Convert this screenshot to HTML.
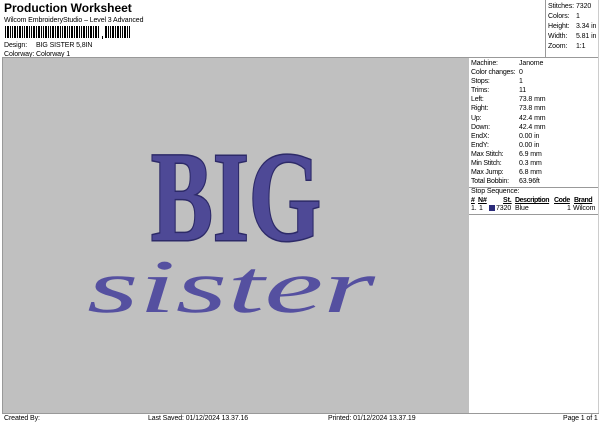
<!DOCTYPE html>
<html><head><meta charset="utf-8"><style>
*{margin:0;padding:0;box-sizing:border-box}
body{width:600px;height:424px;background:#fff;font-family:"Liberation Sans",Arial,sans-serif;color:#000;position:relative;overflow:hidden;font-size:7px}
.a{position:absolute;white-space:nowrap}
.t{font-size:7px;line-height:9px;letter-spacing:-0.1px}
</style></head><body>
<div class="a" style="left:4px;top:1px;font-size:12px;font-weight:bold;line-height:14px">Production Worksheet</div>
<div class="a t" style="left:4px;top:16px">Wilcom EmbroideryStudio – Level 3 Advanced</div>
<svg class="a" style="left:5px;top:26px" width="125" height="14">
<g fill="#000">
<rect x="0" y="0" width="1" height="12"/><rect x="2" y="0" width="2" height="12"/><rect x="5" y="0" width="1" height="12"/><rect x="7" y="0" width="1" height="12"/><rect x="9" y="0" width="2" height="12"/><rect x="12" y="0" width="1" height="12"/><rect x="14" y="0" width="2" height="12"/><rect x="17" y="0" width="1" height="12"/><rect x="19" y="0" width="1" height="12"/><rect x="21" y="0" width="2" height="12"/><rect x="24" y="0" width="1" height="12"/><rect x="26" y="0" width="1" height="12"/><rect x="28" y="0" width="2" height="12"/><rect x="31" y="0" width="1" height="12"/><rect x="33" y="0" width="2" height="12"/><rect x="36" y="0" width="1" height="12"/><rect x="38" y="0" width="1" height="12"/><rect x="40" y="0" width="2" height="12"/><rect x="43" y="0" width="1" height="12"/><rect x="45" y="0" width="1" height="12"/><rect x="47" y="0" width="2" height="12"/><rect x="50" y="0" width="1" height="12"/><rect x="52" y="0" width="2" height="12"/><rect x="55" y="0" width="1" height="12"/><rect x="57" y="0" width="1" height="12"/><rect x="59" y="0" width="2" height="12"/><rect x="62" y="0" width="1" height="12"/><rect x="64" y="0" width="1" height="12"/><rect x="66" y="0" width="2" height="12"/><rect x="69" y="0" width="1" height="12"/><rect x="71" y="0" width="2" height="12"/><rect x="74" y="0" width="1" height="12"/><rect x="76" y="0" width="1" height="12"/><rect x="78" y="0" width="2" height="12"/><rect x="81" y="0" width="1" height="12"/><rect x="83" y="0" width="1" height="12"/><rect x="85" y="0" width="2" height="12"/><rect x="88" y="0" width="1" height="12"/><rect x="90" y="0" width="2" height="12"/><rect x="93" y="0" width="1" height="12"/>
<rect x="97" y="10" width="1" height="3"/>
<rect x="100" y="0" width="2" height="12"/><rect x="103" y="0" width="1" height="12"/><rect x="105" y="0" width="1" height="12"/><rect x="107" y="0" width="2" height="12"/><rect x="110" y="0" width="1" height="12"/><rect x="112" y="0" width="2" height="12"/><rect x="115" y="0" width="1" height="12"/><rect x="117" y="0" width="1" height="12"/><rect x="119" y="0" width="2" height="12"/><rect x="122" y="0" width="1" height="12"/><rect x="124" y="0" width="1" height="12"/>
</g></svg>
<div class="a t" style="left:4px;top:41px">Design:</div><div class="a t" style="left:36px;top:41px">BIG SISTER 5,8IN</div>
<div class="a t" style="left:4px;top:50px">Colorway:</div><div class="a t" style="left:36px;top:50px">Colorway 1</div>

<div class="a" style="left:545px;top:0;width:1px;height:58px;background:#999"></div>
<div class="a t" style="left:548px;top:2px;line-height:10px">Stitches:<br>Colors:<br>Height:<br>Width:<br>Zoom:</div>
<div class="a t" style="left:576px;top:2px;line-height:10px">7320<br>1<br>3.34 in<br>5.81 in<br>1:1</div>

<div class="a" style="left:2px;top:57px;width:597px;height:1px;background:#999"></div>
<div class="a" style="left:2px;top:58px;width:1px;height:356px;background:#999"></div>
<div class="a" style="left:598px;top:0;width:1px;height:414px;background:#ccc"></div>
<div class="a" style="left:3px;top:58px;width:466px;height:355px;background:#c0c0c0"></div>
<div class="a" style="left:2px;top:413px;width:597px;height:1px;background:#999"></div>

<div class="a t" style="left:471px;top:59px;line-height:9.1px;letter-spacing:-0.2px">Machine:<br>Color changes:<br>Stops:<br>Trims:<br>Left:<br>Right:<br>Up:<br>Down:<br>EndX:<br>EndY:<br>Max Stitch:<br>Min Stitch:<br>Max Jump:<br>Total Bobbin:</div>
<div class="a t" style="left:519px;top:59px;line-height:9.1px">Janome<br>0<br>1<br>11<br>73.8 mm<br>73.8 mm<br>42.4 mm<br>42.4 mm<br>0.00 in<br>0.00 in<br>6.9 mm<br>0.3 mm<br>6.8 mm<br>63.96ft</div>
<div class="a" style="left:469px;top:187px;width:129px;height:1px;background:#999"></div>
<div class="a t" style="left:471px;top:187px">Stop Sequence:</div>
<div class="a t" style="left:471px;top:196px;font-weight:bold;text-decoration:underline">#</div>
<div class="a t" style="left:478px;top:196px;font-weight:bold;text-decoration:underline">N#</div>
<div class="a t" style="left:503px;top:196px;font-weight:bold;text-decoration:underline">St.</div>
<div class="a t" style="left:515px;top:196px;font-weight:bold;text-decoration:underline;letter-spacing:-0.4px">Description</div>
<div class="a t" style="left:554px;top:196px;font-weight:bold;text-decoration:underline;letter-spacing:-0.4px">Code</div>
<div class="a t" style="left:574px;top:196px;font-weight:bold;text-decoration:underline;letter-spacing:-0.4px">Brand</div>
<div class="a t" style="left:471px;top:204px">1.</div>
<div class="a t" style="left:479px;top:204px">1</div>
<div class="a" style="left:489px;top:205px;width:6px;height:6px;background:#2b2b7a"></div>
<div class="a t" style="left:496px;top:204px">7320</div>
<div class="a t" style="left:515px;top:204px">Blue</div>
<div class="a t" style="left:567px;top:204px">1</div>
<div class="a t" style="left:573px;top:204px">Wilcom</div>
<div class="a" style="left:469px;top:214px;width:129px;height:1px;background:#999"></div>

<svg class="a" style="left:3px;top:58px" width="466" height="355">
<text x="148" y="182" font-family="Liberation Serif,serif" font-weight="bold" font-size="128" textLength="170" lengthAdjust="spacingAndGlyphs" fill="#4e4996" stroke="#2d2a68" stroke-width="3" paint-order="stroke">BIG</text>
<text x="84" y="254" font-family="Liberation Serif,serif" font-style="italic" font-size="76" textLength="288" lengthAdjust="spacingAndGlyphs" fill="#5550a0">sister</text>
</svg>

<div class="a t" style="left:4px;top:414px">Created By:</div>
<div class="a t" style="left:148px;top:414px">Last Saved: 01/12/2024 13.37.16</div>
<div class="a t" style="left:328px;top:414px">Printed: 01/12/2024 13.37.19</div>
<div class="a t" style="left:563px;top:414px">Page 1 of 1</div>
</body></html>
